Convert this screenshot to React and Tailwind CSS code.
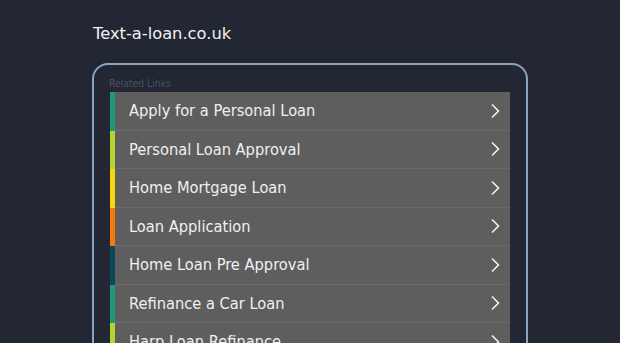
import React from "react";

const items = [
  ["Apply for a Personal Loan", "bg-[#23977a]"],
  ["Personal Loan Approval", "bg-[#b4d531]"],
  ["Home Mortgage Loan", "bg-[#f7d615]"],
  ["Loan Application", "bg-[#f27811]"],
  ["Home Loan Pre Approval", "bg-[#0b4958]"],
  ["Refinance a Car Loan", "bg-[#23977a]"],
  ["Harp Loan Refinance", "bg-[#b4d531]"],
];

function Chevron() {
  return (
    <svg width="10" height="16" viewBox="0 0 10 16" className="shrink-0">
      <path d="M2 1.5 L8.5 8 L2 14.5" fill="none" stroke="#f2f2f2" strokeWidth="1.6" />
    </svg>
  );
}

export default function App() {
  return (
    <div className="w-[620px] h-[343px] overflow-hidden bg-[#222733] font-['DejaVu_Sans',sans-serif]">
      <div className="pl-[93px] pt-[23px] h-[63px]">
        <div className="text-[16.3px] leading-[22px] text-[#f2f2f2]">Text-a-loan.co.uk</div>
      </div>
      <div className="ml-[92px] w-[436px] border-2 border-[#8aa5c1] rounded-[16px] px-4 pb-10">
        <div className="h-[27px] pt-[12px] -ml-[1px] text-[10.3px] leading-[12px] text-[#4a5263] font-['DejaVu_Sans_Condensed',sans-serif]">
          Related Links
        </div>
        <div className="flex flex-col">
          {items.map(([label, color]) => (
            <div key={label} className="flex h-[38.5px] bg-[#5e5e5e]">
              <div className={`w-[5px] shrink-0 ${color}`} />
              <div className="flex flex-1 items-center justify-between border-b border-[#6a6a6a] pl-[14px] pr-[10px] font-['DejaVu_Sans_Condensed',sans-serif] text-[16.3px] text-[#f0f0f0]">
                <span className="pt-[1px]">{label}</span>
                <Chevron />
              </div>
            </div>
          ))}
        </div>
      </div>
    </div>
  );
}
